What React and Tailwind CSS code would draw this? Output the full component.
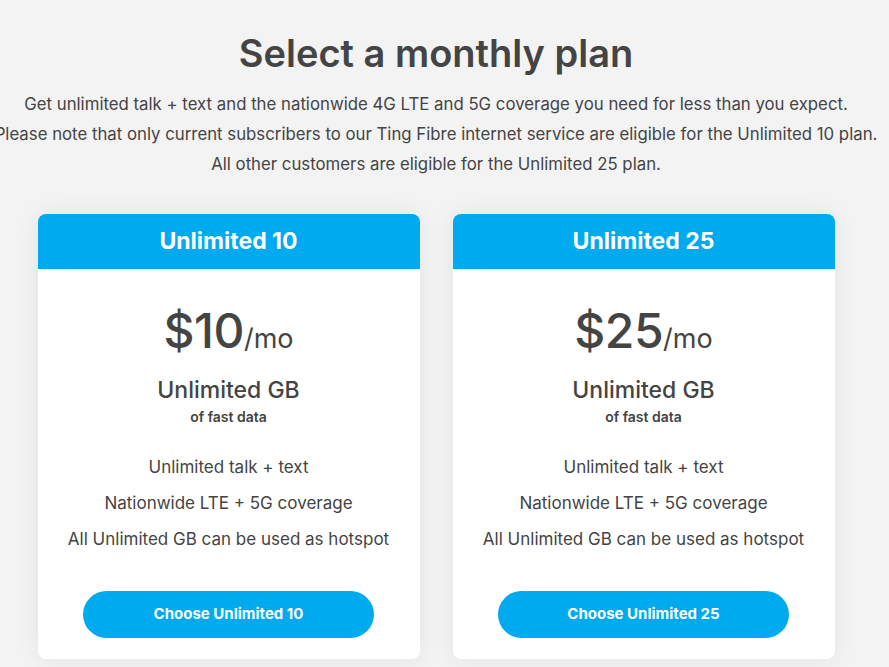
import React from "react";

const plans = [
  { name: "Unlimited 10", price: "$10" },
  { name: "Unlimited 25", price: "$25" },
];

const features = [
  "Unlimited talk + text",
  "Nationwide LTE + 5G coverage",
  "All Unlimited GB can be used as hotspot",
];

function Card({ plan }) {
  return (
    <div className="w-[382px] rounded-[8px] bg-white shadow-[0_0_24px_rgba(0,0,0,0.07)] overflow-hidden">
      <div className="h-[55px] bg-[#00aaee] flex items-center justify-center">
        <span className="text-white text-[23px] font-bold">{plan.name}</span>
      </div>
      <div className="flex flex-col items-center pt-[32px] pb-[21px]">
        <div className="flex items-baseline text-[#444]">
          <span className="text-[48px] font-medium leading-[60px] tracking-[-0.5px]">{plan.price}</span>
          <span className="text-[27px] leading-[60px]">/mo</span>
        </div>
        <div className="mt-[7px] text-[#444] text-[23px] font-medium leading-[28px]">Unlimited GB</div>
        <div className="mt-[4px] text-[#444] text-[14px] font-semibold leading-[18px]">of fast data</div>
        <div className="mt-[30px] flex flex-col items-center gap-[14px] text-[#444] text-[17px] leading-[22px]">
          {features.map((f) => (
            <div key={f}>{f}</div>
          ))}
        </div>
        <button className="mt-[41px] w-[291px] h-[47px] rounded-full bg-[#00aaee] text-white text-[15px] font-bold">
          Choose {plan.name}
        </button>
      </div>
    </div>
  );
}

export default function App() {
  return (
    <div className="min-h-[667px] w-full bg-[#f3f3f3] overflow-hidden" style={{ fontFamily: "Inter, 'Liberation Sans', sans-serif" }}>
      <div className="w-[872px] flex flex-col items-center pt-[28px]">
        <h1 className="text-[38px] font-semibold text-[#444] leading-[50px]">Select a monthly plan</h1>
        <div className="mt-[11px] text-center text-[#444] text-[16.8px] leading-[30px] whitespace-nowrap">
          <p>Get unlimited talk + text and the nationwide 4G LTE and 5G coverage you need for less than you expect.</p>
          <p>Please note that only current subscribers to our Ting Fibre internet service are eligible for the Unlimited 10 plan.</p>
          <p>All other customers are eligible for the Unlimited 25 plan.</p>
        </div>
        <div className="mt-[35px] flex gap-[33px]">
          {plans.map((p) => (
            <Card key={p.name} plan={p} />
          ))}
        </div>
      </div>
    </div>
  );
}
